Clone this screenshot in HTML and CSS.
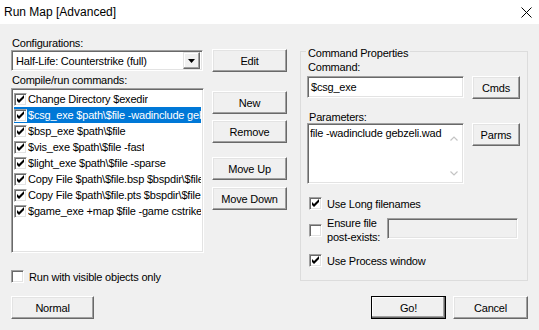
FILE: index.html
```html
<!DOCTYPE html>
<html lang="en">
<head>
    <meta charset="UTF-8">
    <title>Run Map [Advanced]</title>
    <link rel="stylesheet" href="styles.css">
</head>
<body>

<svg class="defs" width="0" height="0">
    <symbol id="check" viewBox="0 0 13 13">
        <polygon points="3,5 5,7 10,2 10,5 5,10 3,8" fill="#000"/>
    </symbol>
</svg>

<div class="titlebar">
    <span>Run Map [Advanced]</span>
    <svg class="close" width="11" height="11" viewBox="0 0 11 11">
        <path d="M0.5 0.5 L10.5 10.5 M10.5 0.5 L0.5 10.5" stroke="#000" stroke-width="1" fill="none"/>
    </svg>
</div>

<div class="content">
    <!-- columna izquierda -->
    <div class="left">
        <div class="label first">Configurations:</div>
        <div class="config-row">
            <div class="combo">
                <span class="combo-text">Half-Life: Counterstrike (full)</span>
                <span class="combo-btn">
                    <svg width="7" height="4" viewBox="0 0 7 4"><polygon points="0,0 7,0 3.5,4" fill="#000"/></svg>
                </span>
            </div>
            <button class="btn">Edit</button>
        </div>

        <div class="label second">Compile/run commands:</div>
        <div class="list-row">
            <div class="list">
                <div class="item"><span class="box"><svg><use href="#check"/></svg></span><span class="txt">Change Directory $exedir</span></div>
                <div class="item sel"><span class="box"><svg><use href="#check"/></svg></span><span class="txt">$csg_exe $path\$file -wadinclude gebzeli.wad</span></div>
                <div class="item"><span class="box"><svg><use href="#check"/></svg></span><span class="txt">$bsp_exe $path\$file</span></div>
                <div class="item"><span class="box"><svg><use href="#check"/></svg></span><span class="txt">$vis_exe $path\$file -fast</span></div>
                <div class="item"><span class="box"><svg><use href="#check"/></svg></span><span class="txt">$light_exe $path\$file -sparse</span></div>
                <div class="item"><span class="box"><svg><use href="#check"/></svg></span><span class="txt">Copy File $path\$file.bsp $bspdir\$file.bsp</span></div>
                <div class="item"><span class="box"><svg><use href="#check"/></svg></span><span class="txt">Copy File $path\$file.pts $bspdir\$file.pts</span></div>
                <div class="item"><span class="box"><svg><use href="#check"/></svg></span><span class="txt">$game_exe +map $file -game cstrike -console</span></div>
            </div>
            <div class="side">
                <button class="btn">New</button>
                <button class="btn remove">Remove</button>
                <button class="btn up">Move Up</button>
                <button class="btn down">Move Down</button>
            </div>
        </div>

        <div class="check-row visible">
            <span class="box"></span>
            <span>Run with visible objects only</span>
        </div>
    </div>

    <!-- propiedades del comando -->
    <div class="group">
        <div class="group-title">Command Properties</div>
        <div class="label cmd-label">Command:</div>
        <div class="field-row">
            <div class="field cmd-field">$csg_exe</div>
            <button class="btn small">Cmds</button>
        </div>
        <div class="label params-label">Parameters:</div>
        <div class="field-row">
            <div class="field params">
                <div class="params-text">file -wadinclude gebzeli.wad</div>
                <div class="scroll">
                    <svg width="8" height="5" viewBox="0 0 8 5"><polyline points="0.5,4.5 4,1 7.5,4.5" stroke="#c4c4c4" stroke-width="1.2" fill="none"/></svg>
                    <svg width="8" height="5" viewBox="0 0 8 5"><polyline points="0.5,0.5 4,4 7.5,0.5" stroke="#c4c4c4" stroke-width="1.2" fill="none"/></svg>
                </div>
            </div>
            <button class="btn small">Parms</button>
        </div>

        <div class="check-row long">
            <span class="box"><svg><use href="#check"/></svg></span>
            <span>Use Long filenames</span>
        </div>
        <div class="check-row ensure">
            <span class="box"></span>
            <span class="two-lines">Ensure file<br>post-exists:</span>
            <div class="field disabled"></div>
        </div>
        <div class="check-row process">
            <span class="box"><svg><use href="#check"/></svg></span>
            <span>Use Process window</span>
        </div>
    </div>
</div>

<div class="actions">
    <button class="btn normal">Normal</button>
    <div class="spacer"></div>
    <button class="btn default">Go!</button>
    <button class="btn">Cancel</button>
</div>

</body>
</html>
```

FILE: styles.css
```css
* {
    box-sizing: border-box;
}
body {
    margin: 0;
    width: 539px;
    height: 330px;
    overflow: hidden;
    background-color: #f0f0f0;
    color: #000;
    font-family: "Liberation Sans", Arial, sans-serif;
    font-size: 11px;
    letter-spacing: -0.2px;
}
.defs {
    position: absolute;
}
.titlebar {
    height: 24px;
    background-color: #fff;
    display: flex;
    align-items: center;
    justify-content: space-between;
    padding: 0 7px 0 4px;
    font-size: 12px;
    letter-spacing: 0;
}
.content {
    display: flex;
    align-items: flex-start;
    padding: 0 11px;
}
.left {
    width: 276px;
}
.label {
    height: 12px;
    line-height: 12px;
    padding-left: 1px;
    white-space: nowrap;
}
.label.first {
    margin-top: 13px;
}
.label.second {
    margin-top: 2px;
}

/* botones clasicos */
.btn {
    width: 75px;
    height: 23px;
    padding: 0;
    margin: 0;
    font-family: inherit;
    font-size: 11px;
    font-weight: normal;
    letter-spacing: inherit;
    color: #000;
    background-color: #f0f0f0;
    border: 1px solid;
    border-color: #fff #696969 #696969 #fff;
    box-shadow: inset -1px -1px #a0a0a0, inset 1px 1px #e3e3e3;
    flex: none;
}
.btn.small {
    width: 48px;
}
.btn.normal {
    width: 83px;
}
.btn.default {
    border-color: #000;
    box-shadow: inset -1px -1px #696969, inset -2px -2px #a0a0a0, inset 1px 1px #fff;
}

/* campos hundidos */
.combo, .list, .field, .box {
    background-color: #fff;
    border: 1px solid;
    border-color: #a0a0a0 #fff #fff #a0a0a0;
    box-shadow: inset 1px 1px #696969, inset -1px -1px #e3e3e3;
}
.config-row {
    display: flex;
    justify-content: space-between;
    height: 23px;
}
.combo {
    width: 192px;
    height: 21px;
    margin-top: 1px;
    display: flex;
    align-items: center;
    padding: 2px 2px 2px 4px;
}
.combo-text {
    flex: 1;
    white-space: nowrap;
}
.combo-btn {
    width: 17px;
    height: 17px;
    display: flex;
    align-items: center;
    justify-content: center;
    background-color: #f0f0f0;
    border: 1px solid;
    border-color: #e3e3e3 #696969 #696969 #e3e3e3;
    box-shadow: inset -1px -1px #a0a0a0, inset 1px 1px #fff;
}
.list-row {
    display: flex;
    margin-top: 2px;
}
.list {
    width: 193px;
    height: 165px;
    padding: 2px;
    overflow: hidden;
}
.item {
    height: 16px;
    display: flex;
    align-items: center;
    white-space: nowrap;
}
.item .box {
    margin-right: 1px;
}
.item .txt {
    overflow: hidden;
}
.item.sel {
    background-color: #0078d7;
    color: #fff;
}
.box {
    width: 13px;
    height: 13px;
    flex: none;
    display: inline-block;
}
.box svg {
    display: block;
    width: 13px;
    height: 13px;
    margin: -1px;
}
.side {
    margin-left: 8px;
    padding-top: 3px;
    display: flex;
    flex-direction: column;
}
.side .remove {
    margin-top: 6px;
}
.side .up {
    margin-top: 14px;
}
.side .down {
    margin-top: 7px;
}
.check-row {
    display: flex;
    align-items: center;
    height: 13px;
    white-space: nowrap;
}
.check-row .box {
    margin-right: 5px;
}
.check-row.visible {
    margin-top: 17px;
}

/* grupo de la derecha */
.group {
    margin-left: 13px;
    margin-top: 27px;
    width: 228px;
    height: 230px;
    border: 1px solid #dcdcdc;
    padding: 0 6px;
}
.group-title {
    width: fit-content;
    margin: -5px 0 0 -1px;
    padding: 0 2px;
    line-height: 12px;
    background-color: #f0f0f0;
    white-space: nowrap;
}
.cmd-label {
    margin-top: 2px;
}
.params-label {
    margin-top: 12px;
    padding-left: 2px;
}
.field-row {
    display: flex;
    align-items: flex-start;
    gap: 8px;
}
.cmd-label + .field-row {
    margin-top: 3px;
}
.field {
    width: 157px;
    height: 22px;
    padding: 2px 3px;
    line-height: 17px;
    white-space: nowrap;
}
.field.params {
    height: 61px;
    padding: 2px 1px 2px 2px;
    display: flex;
    line-height: 12px;
}
.params-text {
    flex: 1;
    padding-top: 1px;
    overflow: hidden;
}
.scroll {
    width: 17px;
    display: flex;
    flex-direction: column;
    justify-content: space-between;
    align-items: center;
    padding: 10px 0 5px;
}
.scroll svg {
    display: block;
}
.check-row.long {
    margin-top: 13px;
    padding-left: 2px;
}
.check-row.ensure {
    height: 28px;
    margin-top: 6px;
    padding-left: 2px;
}
.two-lines {
    line-height: 14px;
}
.field.disabled {
    width: 131px;
    height: 21px;
    margin-left: auto;
    margin-right: 3px;
    margin-bottom: 3px;
    background-color: #f0f0f0;
}
.check-row.process {
    margin-top: 10px;
    padding-left: 2px;
}

/* botones de abajo */
.actions {
    display: flex;
    gap: 7px;
    padding: 0 11px;
    margin-top: 13px;
}
.spacer {
    flex: 1;
}
```
